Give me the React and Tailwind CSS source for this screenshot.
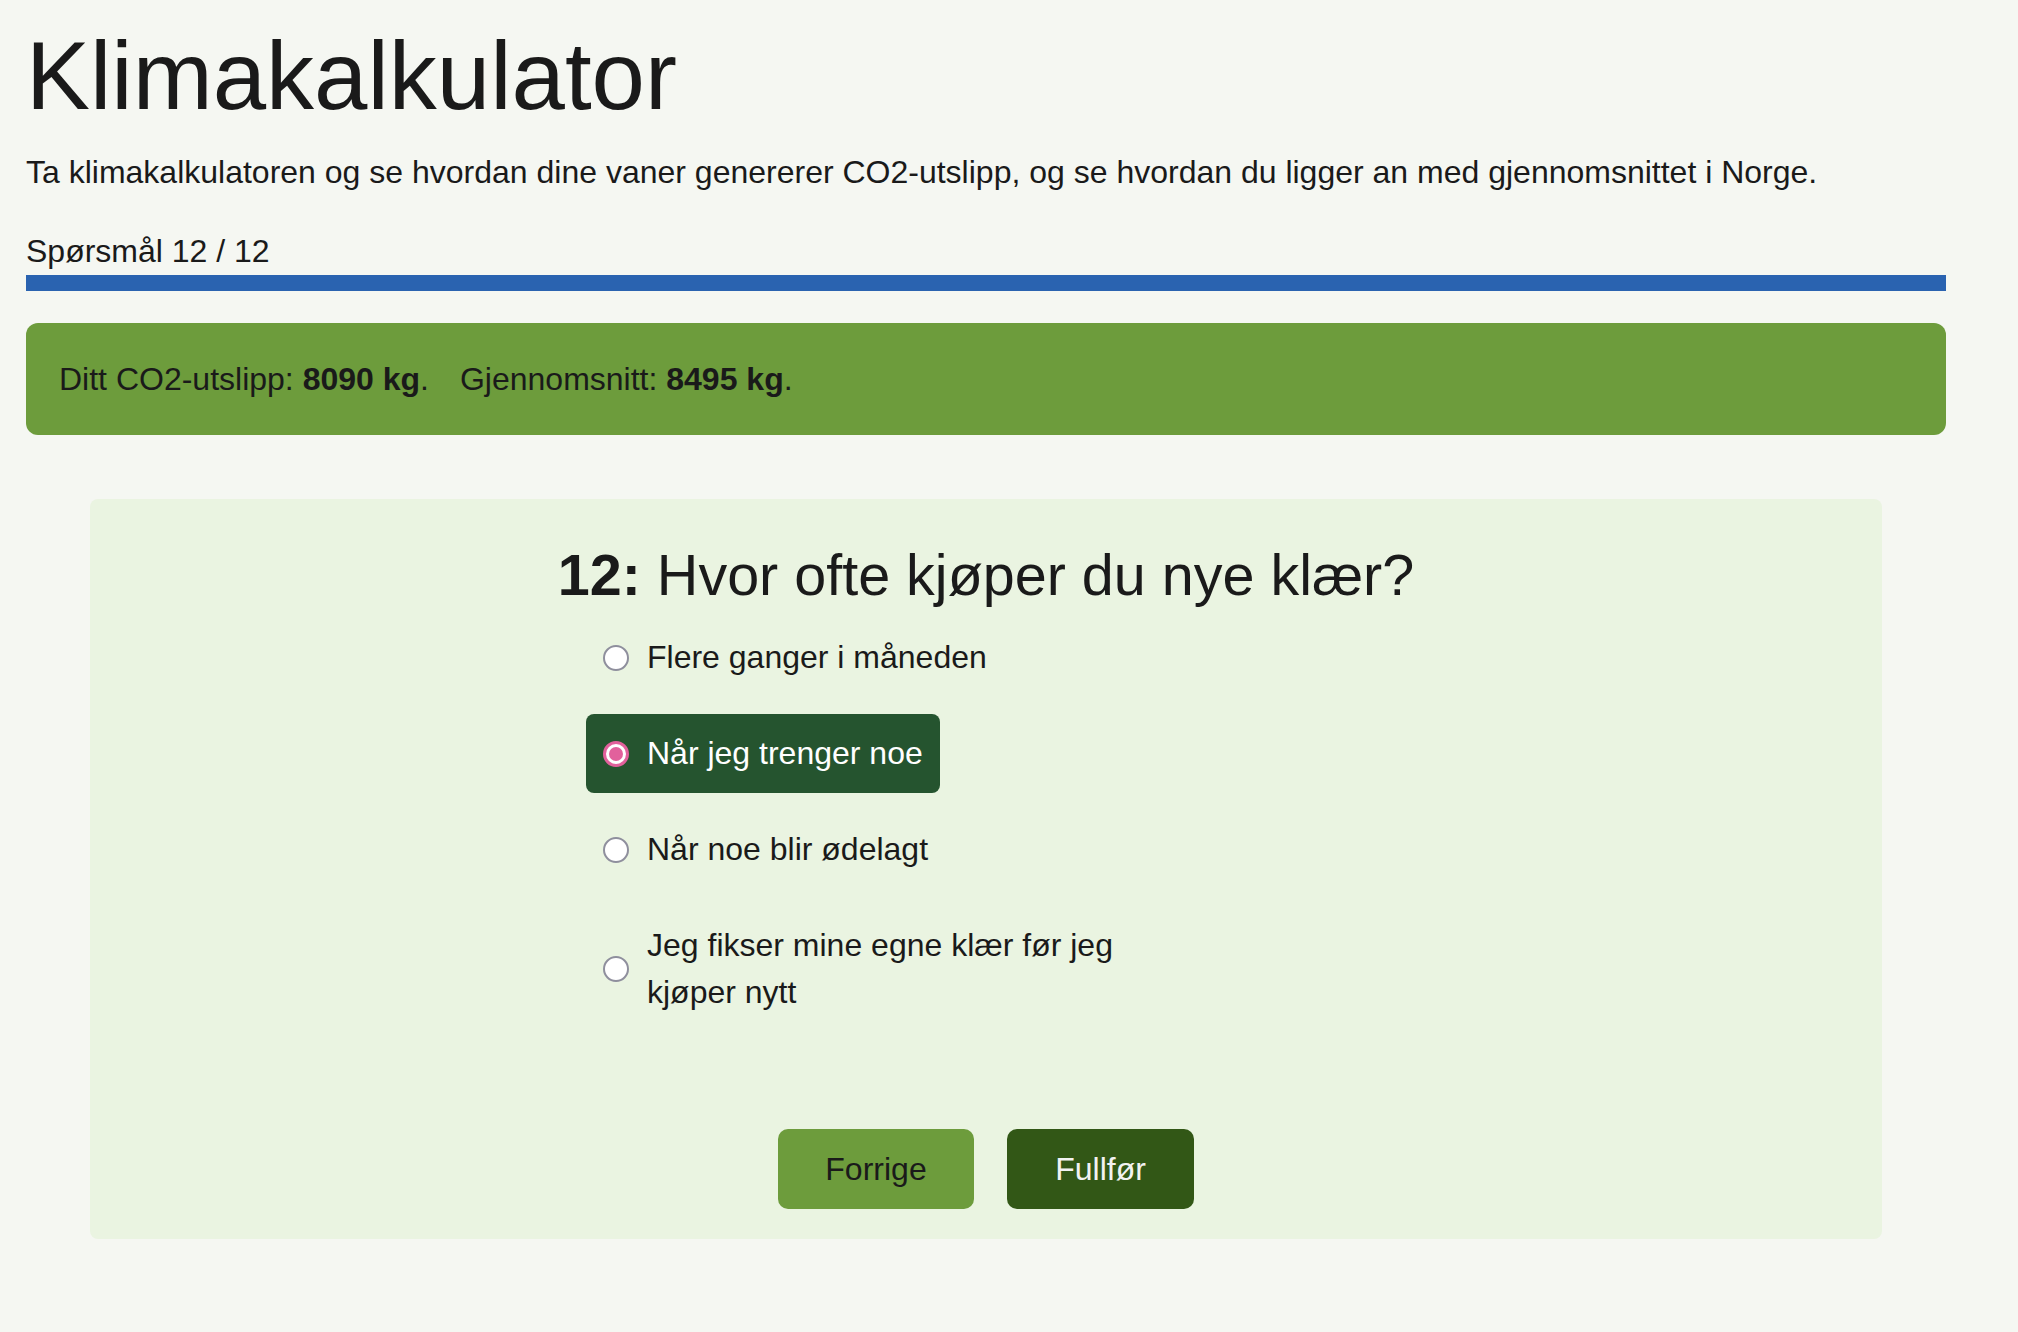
import React from 'react';

const options = [
  'Flere ganger i måneden',
  'Når jeg trenger noe',
  'Når noe blir ødelagt',
  'Jeg fikser mine egne klær før jeg kjøper nytt',
];

const Radio = ({ checked }) =>
  checked ? (
    <span className="flex h-[26px] w-[26px] shrink-0 items-center justify-center rounded-full border-[3px] border-[#e2619c] bg-white">
      <span className="h-[14px] w-[14px] rounded-full bg-[#e2619c]" />
    </span>
  ) : (
    <span className="h-[26px] w-[26px] shrink-0 rounded-full border-2 border-[#8f8f9d] bg-white" />
  );

const App = () => {
  const selected = 1;

  return (
    <div
      className="min-h-[1332px] bg-[#f5f7f2] px-[26px] pt-[21px] text-[#1a1a1a]"
      style={{ fontFamily: '"Liberation Sans", Arial, sans-serif' }}
    >
      <div className="w-[1920px]">
        <h1 className="text-[96px] leading-[1.15] font-normal">Klimakalkulator</h1>
        <p className="mt-[23px] text-[32px] leading-[1.15]">
          Ta klimakalkulatoren og se hvordan dine vaner genererer CO2-utslipp, og se hvordan du ligger an med gjennomsnittet i Norge.
        </p>

        <div className="mt-[42px] text-[32px] leading-[1.15]">Spørsmål 12 / 12</div>
        <div className="mt-[5px] h-[16px] w-full bg-[#2a63b0]" />

        <div className="mt-[32px] flex h-[112px] items-center rounded-[12px] bg-[#6d9c3c] px-[33px] text-[32px]">
          <span>
            Ditt CO2-utslipp: <b>8090 kg</b>.
          </span>
          <span className="ml-[31px]">
            Gjennomsnitt: <b>8495 kg</b>.
          </span>
        </div>

        <div className="mx-[64px] mt-[64px] rounded-[8px] bg-[#eaf4e1] pt-[43px] pb-[30px]">
          <h2 className="text-center text-[57.5px] leading-[1.15]">
            <b>12:</b> Hvor ofte kjøper du nye klær?
          </h2>

          <div className="mx-auto mt-[10px] flex w-[800px] flex-col items-start gap-[17px]">
            {options.map((opt, i) => (
              <label
                key={opt}
                className={
                  'flex max-w-[560px] items-center gap-[18px] rounded-[8px] px-[17px] py-4 text-[32px] leading-[47px] ' +
                  (i === selected ? 'bg-[#25542f] text-white' : '')
                }
              >
                <Radio checked={i === selected} />
                <span>{opt}</span>
              </label>
            ))}
          </div>

          <div className="mt-[97px] flex justify-center gap-[33px]">
            <button className="h-[80px] w-[196px] rounded-[10px] bg-[#6d9c3c] text-[32px] text-[#1a1a1a]">
              Forrige
            </button>
            <button className="h-[80px] w-[187px] rounded-[10px] bg-[#325716] text-[32px] text-[#f2f2f2]">
              Fullfør
            </button>
          </div>
        </div>
      </div>
    </div>
  );
};

export default App;
